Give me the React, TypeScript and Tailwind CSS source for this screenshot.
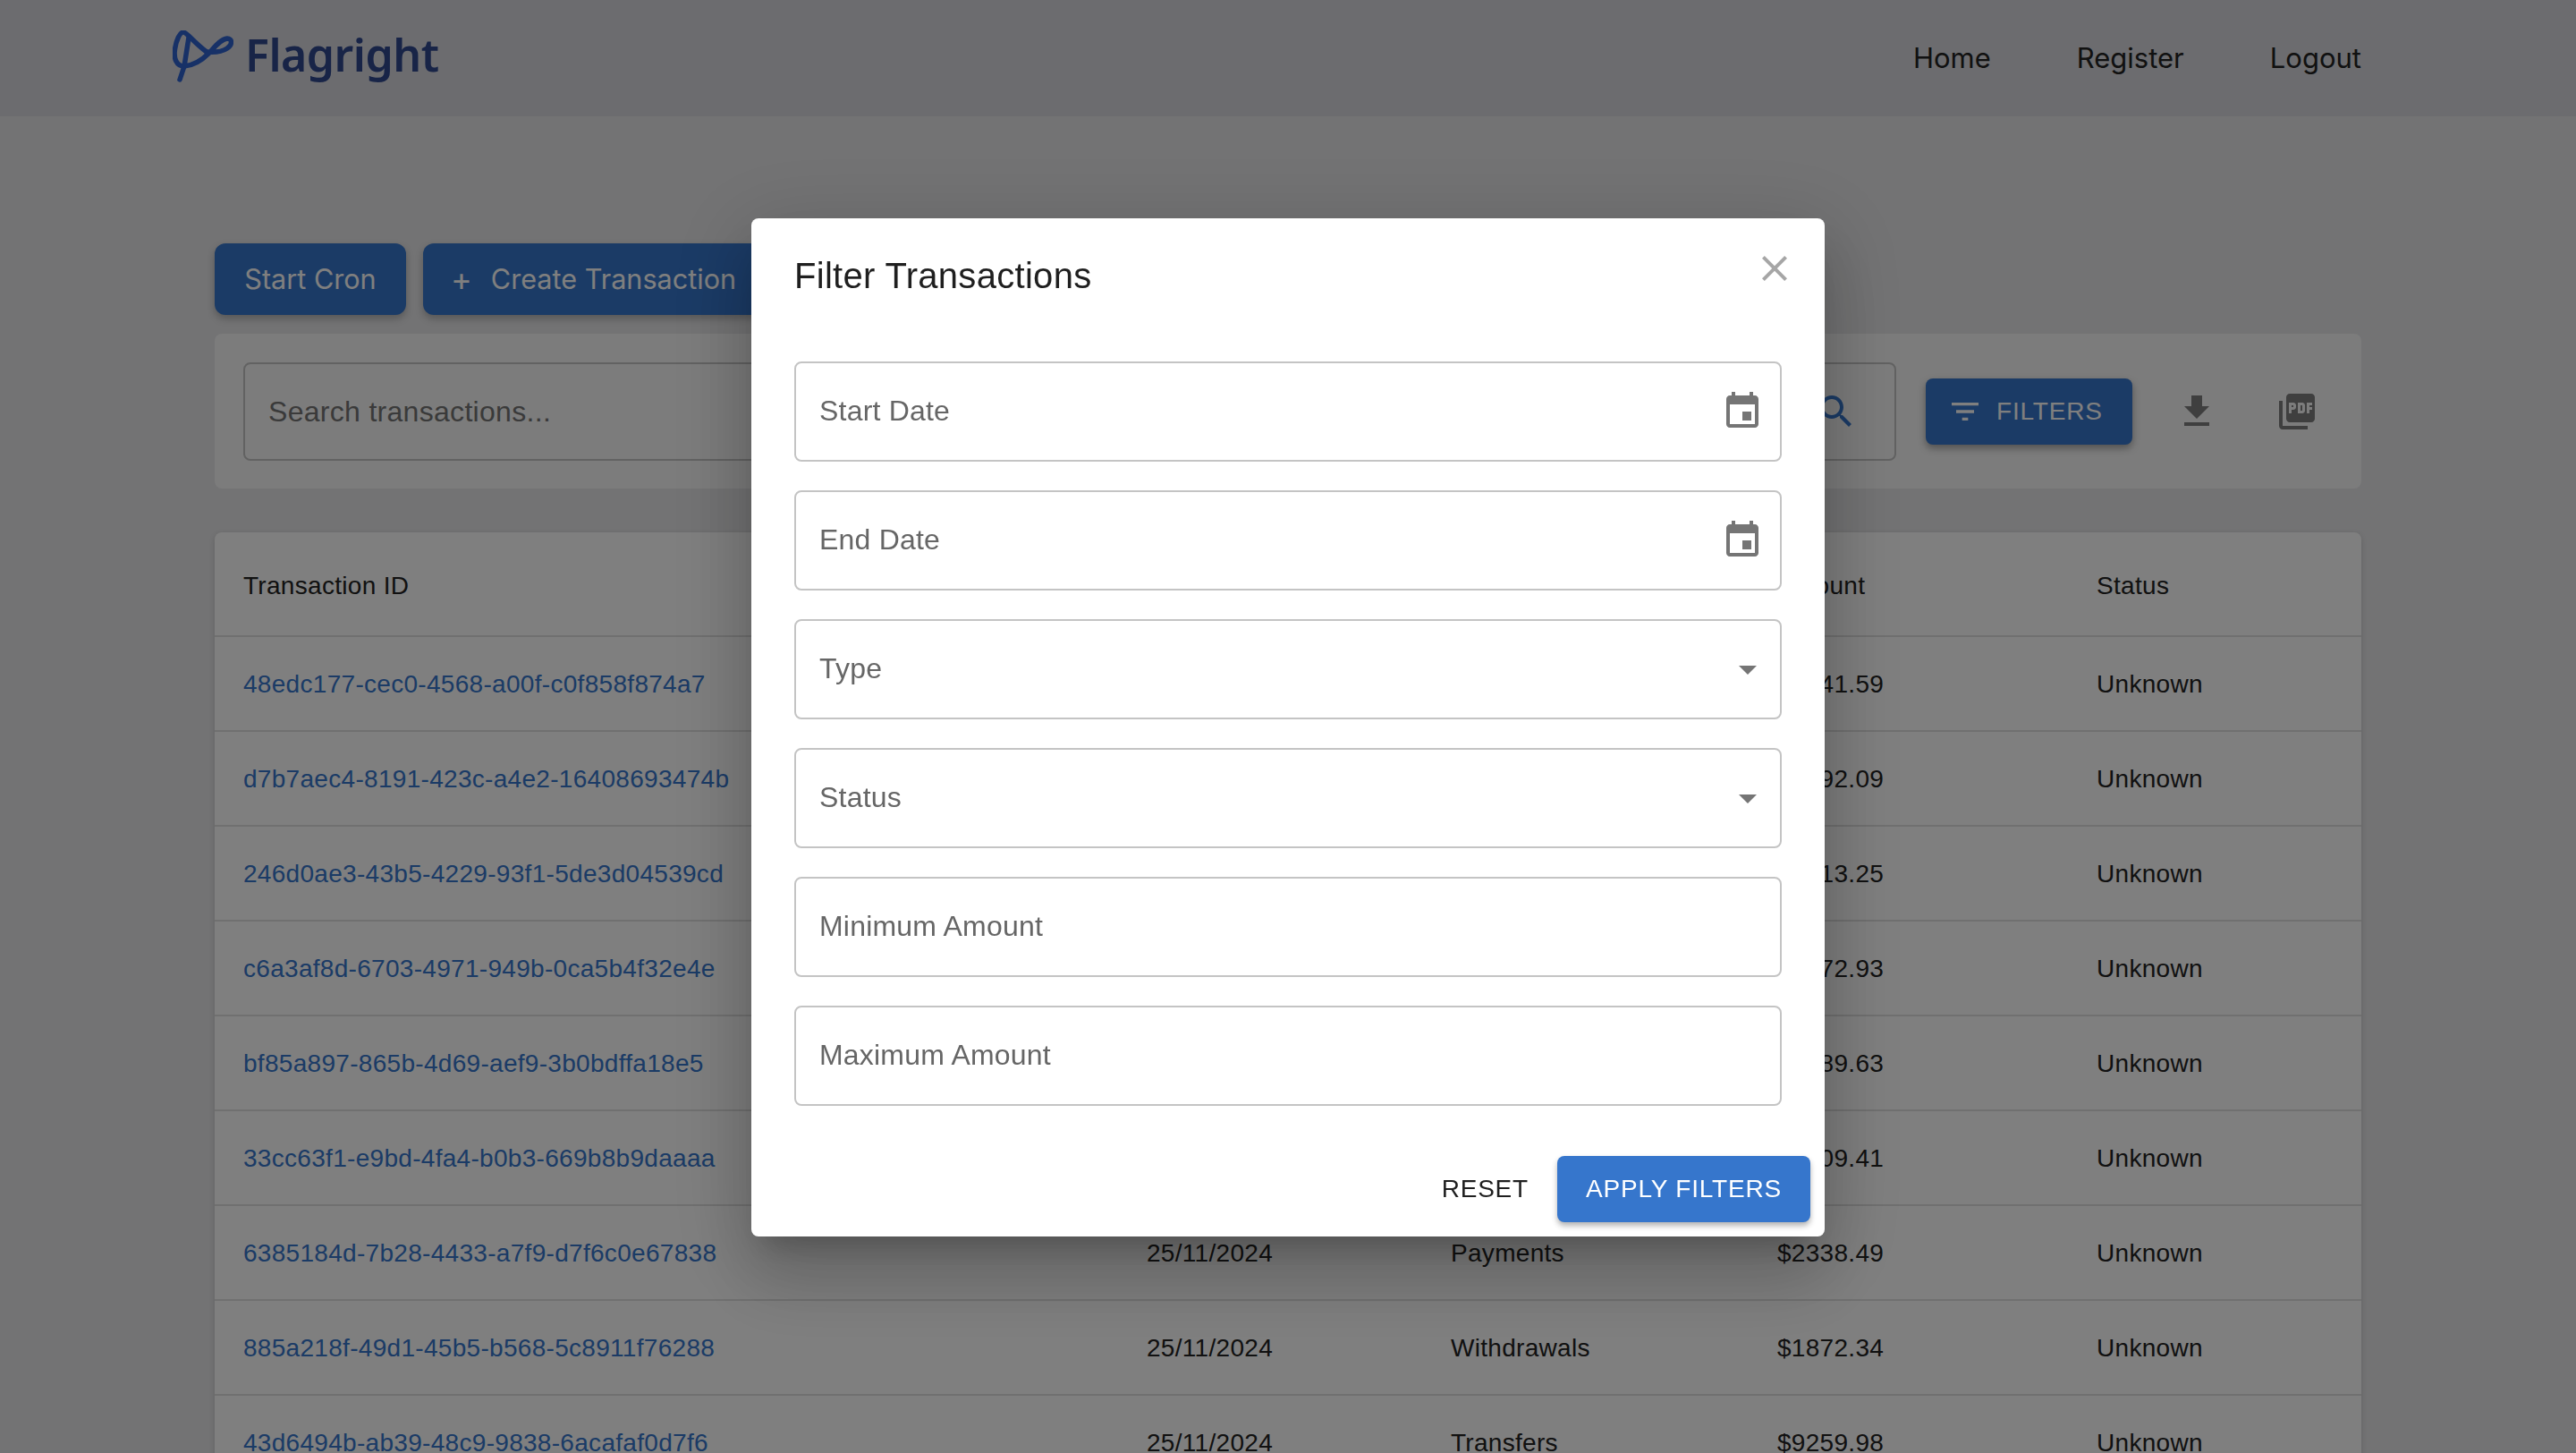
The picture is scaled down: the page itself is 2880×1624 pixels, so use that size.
const rows = [
  ["48edc177-cec0-4568-a00f-c0f858f874a7", "25/11/2024", "Deposits", "$4541.59"],
  ["d7b7aec4-8191-423c-a4e2-16408693474b", "25/11/2024", "Transfers", "$7192.09"],
  ["246d0ae3-43b5-4229-93f1-5de3d04539cd", "25/11/2024", "Payments", "$3013.25"],
  ["c6a3af8d-6703-4971-949b-0ca5b4f32e4e", "25/11/2024", "Withdrawals", "$6672.93"],
  ["bf85a897-865b-4d69-aef9-3b0bdffa18e5", "25/11/2024", "Deposits", "$5389.63"],
  ["33cc63f1-e9bd-4fa4-b0b3-669b8b9daaaa", "25/11/2024", "Transfers", "$8209.41"],
  ["6385184d-7b28-4433-a7f9-d7f6c0e67838", "25/11/2024", "Payments", "$2338.49"],
  ["885a218f-49d1-45b5-b568-5c8911f76288", "25/11/2024", "Withdrawals", "$1872.34"],
  ["43d6494b-ab39-48c9-9838-6acafaf0d7f6", "25/11/2024", "Transfers", "$9259.98"],
];

const tableCols = "grid grid-cols-[1010px_340px_365px_357px_1fr] items-center pl-[32px]";
const fieldBox =
  "flex h-[112px] items-center justify-between rounded-lg border-2 border-[#c4c4c4] pl-[26px] pr-[18px] text-[32px] tracking-[0.2px] text-[#666666]";

function MuiIcon({ d, className }: { d: string; className: string }) {
  return (
    <svg viewBox="0 0 24 24" fill="currentColor" className={className}>
      <path d={d} />
    </svg>
  );
}

const eventPath =
  "M17 12h-5v5h5v-5zM16 1v2H8V1H6v2H5c-1.11 0-1.99.9-1.99 2L3 19c0 1.1.89 2 2 2h14c1.1 0 2-.9 2-2V5c0-1.1-.9-2-2-2h-1V1h-2zm3 18H5V8h14v11z";
const pdfPath =
  "M20 2H8c-1.1 0-2 .9-2 2v12c0 1.1.9 2 2 2h12c1.1 0 2-.9 2-2V4c0-1.1-.9-2-2-2zm-8.5 7.5c0 .83-.67 1.5-1.5 1.5H9v2H7.5V7H10c.83 0 1.5.67 1.5 1.5v1zm5 2c0 .83-.67 1.5-1.5 1.5h-2.5V7H15c.83 0 1.5.67 1.5 1.5v3zm4-3H19v1h1.5V11H19v2h-1.5V7h3v1.5zM9 9.5h1v-1H9v1zM4 6H2v14c0 1.1.9 2 2 2h14v-2H4V6zm10 5.5h1v-3h-1v3z";

function Logo() {
  return (
    <svg viewBox="0 0 68 58" fill="none" className="-mt-[4px] h-[58px] w-[68px] text-[#2f62cf]" stroke="currentColor" strokeWidth="5.5" strokeLinecap="round" strokeLinejoin="round">
      <path d="M8 55 L13 40" />
      <path d="M13 40 C4 40 1 31 2.5 21 C4 11 8 2 12 2 C16 2 22 12 38 24" />
      <path d="M18 8 L13 40 C24 39 33 33 40 26 C46 20 53 10 61 9 C67 9 67 16 61 20 C55 24 48 25 38 24" />
    </svg>
  );
}

function Field({ label, icon }: { label: string; icon?: "date" | "select" }) {
  return (
    <div className={fieldBox}>
      <span className="-mt-[2px]">{label}</span>
      {icon === "date" && <MuiIcon d={eventPath} className="h-12 w-12 text-[#757575]" />}
      {icon === "select" && <MuiIcon d="M7 10l5 5 5-5z" className="-mr-[6px] h-12 w-12 text-[#757575]" />}
    </div>
  );
}

export default function App() {
  return (
    <div className="relative h-[1624px] overflow-hidden bg-[#e6e6e8] font-['Liberation_Sans',sans-serif]">
      <nav className="flex h-[130px] items-center justify-between bg-[#d8d9de] pl-[193px] pr-[240px]">
        <div className="flex items-center gap-[13px]">
          <Logo />
          <span className="-mt-[8px] font-['Noto_Sans',sans-serif] text-[50px] font-semibold leading-none tracking-[-0.5px] text-[#30488f]">Flagright</span>
        </div>
        <div className="flex items-center gap-[96px] font-['Inter',sans-serif] text-[31px] text-[#222222]">
          <span>Home</span>
          <span>Register</span>
          <span>Logout</span>
        </div>
      </nav>

      <main className="px-[240px] pt-[142px]">
        <div className="flex gap-[19px] font-['Inter',sans-serif] text-[30.6px] text-white">
          <button type="button" className="h-20 w-[214px] rounded-xl bg-[#3676cc] shadow-[0_4px_8px_rgba(0,0,0,0.25)]">Start Cron</button>
          <button type="button" className="flex h-20 items-center gap-[21px] rounded-xl bg-[#3676cc] pl-[31px] pr-[32px] shadow-[0_4px_8px_rgba(0,0,0,0.25)]">
            <span className="text-[36px] leading-none">+</span>
            Create Transaction
          </button>
        </div>

        <div className="mt-[21px] flex h-[173px] items-center rounded-lg bg-[#f8f8f8] pl-[32px]">
          <div className="flex h-[110px] w-[1848px] items-center justify-between rounded-lg border-2 border-[#c4c4c4] bg-[#f8f8f8] pl-[26px] pr-[41px] text-[32px] tracking-[0.3px] text-[#757575]">
            <span>Search transactions...</span>
            <MuiIcon
              d="M15.5 14h-.79l-.28-.27C15.41 12.59 16 11.11 16 9.5 16 5.91 13.09 3 9.5 3S3 5.91 3 9.5 5.91 16 9.5 16c1.61 0 3.09-.59 4.23-1.57l.27.28v.79l5 4.99L20.49 19l-4.99-5zm-6 0C7.01 14 5 11.99 5 9.5S7.01 5 9.5 5 14 7.01 14 9.5 11.99 14 9.5 14z"
              className="h-12 w-12 text-[#3676cc]"
            />
          </div>
          <button type="button" className="ml-[33px] flex h-[74px] w-[231px] items-center gap-[15px] rounded-lg bg-[#3676cc] pl-[24px] text-[28px] tracking-[0.8px] text-white shadow-[0_4px_8px_rgba(0,0,0,0.35)]">
            <MuiIcon d="M10 18h4v-2h-4v2zM3 6v2h18V6H3zm3 7h12v-2H6v2z" className="h-10 w-10" />
            FILTERS
          </button>
          <MuiIcon d="M19 9h-4V3H9v6H5l7 7 7-7zM5 18v2h14v-2H5z" className="ml-[48px] h-12 w-12 text-[#7f7f7f]" />
          <MuiIcon d={pdfPath} className="ml-[64px] h-12 w-12 text-[#7f7f7f]" />
        </div>

        <div className="mt-[49px] rounded-lg bg-white text-[28px] tracking-[0.3px] text-[#222222] shadow-[0_2px_6px_rgba(0,0,0,0.15)]">
          <div className={`${tableCols} h-[117px] border-b-2 border-[#e0e0e0] pt-[5px]`}>
            <span>Transaction ID</span>
            <span>Date</span>
            <span>Type</span>
            <span>Amount</span>
            <span>Status</span>
          </div>
          {rows.map((row) => (
            <div key={row[0]} className={`${tableCols} h-[106px] border-b-2 border-[#e0e0e0] pt-[2px]`}>
              <span className="text-[#3676cc]">{row[0]}</span>
              <span>{row[1]}</span>
              <span>{row[2]}</span>
              <span>{row[3]}</span>
              <span>Unknown</span>
            </div>
          ))}
        </div>
      </main>

      <div className="fixed inset-0 flex items-center justify-center bg-black/50">
        <div className="relative mt-[1px] flex w-[1200px] flex-col rounded-lg bg-white shadow-[0_22px_30px_-14px_rgba(0,0,0,0.2),0_48px_76px_6px_rgba(0,0,0,0.14),0_18px_92px_16px_rgba(0,0,0,0.12)]">
          <h2 className="px-[48px] pt-[32px] text-[40px] leading-[64px] tracking-[0.3px] text-[#1f1f1f]">Filter Transactions</h2>
          <button type="button" className="absolute right-[32px] top-[32px] text-[#a6a6a6]" aria-label="Close">
            <MuiIcon d="M19 6.41 17.59 5 12 10.59 6.41 5 5 6.41 10.59 12 5 17.59 6.41 19 12 13.41 17.59 19 19 17.59 13.41 12z" className="h-12 w-12" />
          </button>

          <div className="mt-[64px] flex flex-col gap-[32px] px-[48px]">
            <Field label="Start Date" icon="date" />
            <Field label="End Date" icon="date" />
            <Field label="Type" icon="select" />
            <Field label="Status" icon="select" />
            <Field label="Minimum Amount" />
            <Field label="Maximum Amount" />
          </div>

          <div className="mt-[56px] flex items-center justify-end gap-[32px] pb-[16px] pr-[16px] text-[28px] tracking-[0.8px]">
            <button type="button" className="text-[#1f1f1f]">RESET</button>
            <button type="button" className="h-[74px] w-[283px] rounded-lg bg-[#3676cc] text-white shadow-[0_4px_6px_rgba(0,0,0,0.3)]">APPLY FILTERS</button>
          </div>
        </div>
      </div>
    </div>
  );
}
